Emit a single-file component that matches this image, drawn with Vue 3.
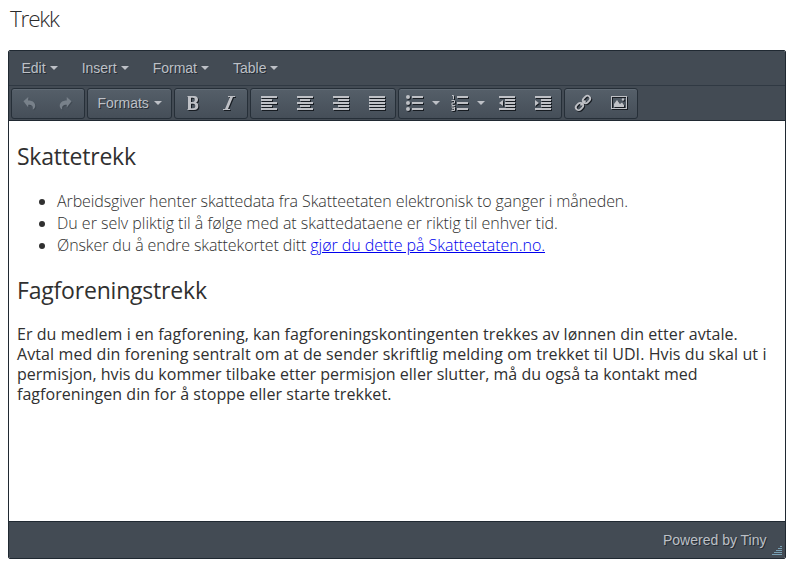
<script setup>
const menus = ['Edit', 'Insert', 'Format', 'Table']
const aligns = [
  { name: 'left', rows: [[0, 16], [0, 11], [0, 16], [0, 11], [0, 16]] },
  { name: 'center', rows: [[0, 16], [3, 10], [0, 16], [3, 10], [0, 16]] },
  { name: 'right', rows: [[0, 16], [5, 11], [0, 16], [5, 11], [0, 16]] },
  { name: 'justify', rows: [[0, 16], [0, 16], [0, 16], [0, 16], [0, 16]] }
]
</script>

<template>
  <main class="page">
    <h1 class="title">Trekk</h1>
    <section class="editor">
      <nav class="menubar">
        <button v-for="menu in menus" :key="menu" class="menu">
          <span>{{ menu }}</span><i class="caret"></i>
        </button>
      </nav>
      <div class="toolbar">
        <div class="group history">
          <button class="tool dim" aria-label="Undo">
            <svg width="16" height="16" viewBox="0 0 16 16"><path d="M6 1v4c5 0 8 2.500 8 6 0 2-1 3.500-3 4.500 1-3.500-.5-5.500-5-5.500v3L.5 6z" /></svg>
          </button>
          <button class="tool dim redo" aria-label="Redo">
            <svg width="16" height="16" viewBox="0 0 16 16"><path d="M10 1v4c-5 0-8 2.500-8 6 0 2 1 3.500 3 4.500-1-3.500.5-5.500 5-5.500v3L15.500 6z" /></svg>
          </button>
        </div>
        <div class="group formats">
          <button class="menu"><span>Formats</span><i class="caret"></i></button>
        </div>
        <div class="group styles">
          <button class="tool" aria-label="Bold">
            <svg width="16" height="16" viewBox="0 0 16 16"><path fill-rule="evenodd" d="M2.500 1H9c2.700 0 4 1.500 4 3.500 0 1.500-.7 2.500-2 3 1.700.5 2.300 1.700 2.300 3.500 0 2.500-1.500 4-4.300 4H2.500v-1H3V2h-.5zM6 2.700V7h1.800c1.500 0 2-1 2-2.200s-.5-2.100-2-2.100zM6 8.700v4.600h2c1.700 0 2.300-1 2.300-2.300S9.700 8.700 8 8.700z" /></svg>
          </button>
          <button class="tool" aria-label="Italic">
            <svg width="16" height="16" viewBox="0 0 16 16"><path d="M7 1h7v1h-2L7 14h2v1H2v-1h2L9 2H7z" /></svg>
          </button>
        </div>
        <div class="group">
          <button v-for="align in aligns" :key="align.name" class="tool" :aria-label="align.name">
            <svg width="16" height="16" viewBox="0 0 16 16"><rect v-for="(row, i) in align.rows" :key="i" :x="row[0]" :y="1 + i * 3" :width="row[1]" height="2" /></svg>
          </button>
        </div>
        <div class="group lists">
          <button class="tool split" aria-label="Bullet list">
            <svg width="17" height="16" viewBox="0 0 17 16"><circle cx="2" cy="2" r="2" /><circle cx="2" cy="8" r="2" /><circle cx="2" cy="14" r="2" /><path d="M6 1h11v2H6zM6 7h11v2H6zM6 13h11v2H6z" /></svg>
            <i class="caret"></i>
          </button>
          <button class="tool split" aria-label="Numbered list">
            <svg width="17" height="16" viewBox="0 0 17 16"><path d="M6 1h11v2H6zM6 7h11v2H6zM6 13h11v2H6z" /><path class="thin" d="M1 .5h1.500V4M.5 5.500h3v2.500h-2.500v2.500h3M.5 12h3v3.500h-3M1 13.700h2.500" /></svg>
            <i class="caret"></i>
          </button>
          <button class="tool" aria-label="Outdent">
            <svg width="16" height="16" viewBox="0 0 16 16"><path d="M0 1h16v2H0zM6 4h10v2H6zM6 7h10v2H6zM6 10h10v2H6zM0 13h16v2H0zM4 5v6L0 8z" /></svg>
          </button>
          <button class="tool" aria-label="Indent">
            <svg width="16" height="16" viewBox="0 0 16 16"><path d="M0 1h16v2H0zM6 4h10v2H6zM6 7h10v2H6zM6 10h10v2H6zM0 13h16v2H0zM0 5v6L4 8z" /></svg>
          </button>
        </div>
        <div class="group media">
          <button class="tool" aria-label="Link">
            <svg width="16" height="16" viewBox="0 0 16 16"><g class="link" transform="rotate(-45 8 8)"><rect x="-1" y="5.200" width="8" height="5.600" rx="2.800" /><rect x="9" y="5.200" width="8" height="5.600" rx="2.800" /><path d="M4.500 8h7" /></g></svg>
          </button>
          <button class="tool" aria-label="Image">
            <svg width="16" height="16" viewBox="0 0 16 16"><path fill-rule="evenodd" d="M0 1h16v13H0zM1 2v11h14V2z" /><path d="M3 12V9l3-4 3 4 2-1.500 2 2.500v2z" /><circle cx="12" cy="4.500" r="1.200" /></svg>
          </button>
        </div>
      </div>
      <article class="content">
        <h2 class="h-one">Skattetrekk</h2>
        <ul>
          <li class="li-one">Arbeidsgiver henter skattedata fra Skatteetaten elektronisk to ganger i måneden.</li>
          <li class="li-two">Du er selv pliktig til å følge med at skattedataene er riktig til enhver tid.</li>
          <li class="li-three">Ønsker du å endre skattekortet ditt <a>gjør du dette på Skatteetaten.no.</a></li>
        </ul>
        <h2 class="h-two">Fagforeningstrekk</h2>
        <p>
          <span class="p-one">Er du medlem i en fagforening, kan fagforeningskontingenten trekkes av lønnen din etter avtale.</span><br>
          <span class="p-two">Avtal med din forening sentralt om at de sender skriftlig melding om trekket til UDI. Hvis du skal ut i</span><br>
          <span class="p-three">permisjon, hvis du kommer tilbake etter permisjon eller slutter, må du også ta kontakt med</span><br>
          <span class="p-four">fagforeningen din for å stoppe eller starte trekket.</span>
        </p>
      </article>
      <footer class="statusbar">
        <span>Powered by Tiny</span>
        <svg class="grip" width="10" height="10" viewBox="0 0 10 10"><path d="M8 .5h2M6 2.500h4M4 4.500h6M2 6.500h8M0 8.500h10" /></svg>
      </footer>
    </section>
  </main>
</template>

<style>
body { background: #fff; }
</style>

<style scoped>
* { box-sizing: border-box; }
.page { width: 793px; height: 572px; padding: 0 7px 0 8px; overflow: hidden; font-family: "Open Sans", "Noto Sans", sans-serif; color: #2b2b2b; }
.title { margin: 0; height: 50px; padding: 0 0 0 2px; font-size: 22.5px; line-height: 37px; font-weight: 300; letter-spacing: -1.2px; }
.editor { height: 509px; border: 1px solid #202932; border-radius: 2px; background: #fff; display: flex; flex-direction: column; overflow: hidden; }
button { font: inherit; color: inherit; border: 0; background: none; padding: 0; margin: 0; text-shadow: inherit; }
.menubar, .toolbar, .statusbar { background: #434b54; color: #bdc0c6; font-family: "Liberation Sans", Arial, sans-serif; font-size: 14px; text-shadow: 1px 1px #252c34; flex: none; }
.menubar { height: 34px; display: flex; padding: 0 0 0 12.5px; gap: 24px; }
.menu { display: flex; align-items: center; gap: 4px; height: 34px; white-space: nowrap; }
.caret { width: 0; height: 0; border: 4px solid transparent; border-top-color: #bdc0c6; border-bottom: 0; }
.toolbar { height: 36px; border-top: 1px solid #303943; border-bottom: 1px solid #202932; padding: 2px; display: flex; gap: 2px; }
.group { height: 31px; flex: none; border: 1px solid #262f38; border-radius: 3px; display: flex; align-items: center; background: linear-gradient(#555f69, #454e58); box-shadow: inset 0 1px #606a74; }
.group .menu { height: 28px; margin-bottom: 1px; padding-left: 9.5px; gap: 5px; }
.history, .styles, .media { width: 74px; }
.formats { width: 85px; }
.tool { width: 36px; height: 28px; margin-bottom: 1px; display: flex; align-items: center; justify-content: center; }
.tool svg { fill: #bfc1c6; filter: drop-shadow(1px 1px 0 #171c22); overflow: visible; }
.dim svg { width: 14px; height: 14px; fill: #78818a; filter: drop-shadow(1px 1px 0 #414a53); }
.redo { padding-right: 2px; }
.split { width: 45px; gap: 9px; justify-content: flex-start; padding-left: 7px; }
.tool .thin { fill: none; stroke: #bfc1c6; stroke-width: 1; }
.link { fill: none; stroke: #bfc1c6; stroke-width: 1.8; }
.content { flex: 1; min-height: 0; padding: 18px 8px 0; font-size: 16px; color: #303030; white-space: nowrap; }
h2 { margin: 0; font-size: 23px; line-height: 34px; font-weight: 400; }
.h-one { letter-spacing: -0.25px; }
.h-two { letter-spacing: -0.2px; }
ul { margin: 17px 0 17px; padding: 0 0 0 40px; }
li { line-height: 22px; font-weight: 300; }
.li-one { letter-spacing: -0.09px; }
.li-two { letter-spacing: -0.015px; }
.li-three { letter-spacing: -0.1px; }
.li-three a { letter-spacing: -0.04px; }
a { color: #0000ee; text-decoration: underline; }
p { margin: 17px 0 0; line-height: 20px; }
.p-one { letter-spacing: 0.06px; }
.p-two { letter-spacing: 0.095px; }
.p-three { letter-spacing: 0.02px; }
.p-four { letter-spacing: 0.04px; }
.statusbar { height: 37px; border-top: 1px solid #202932; display: flex; align-items: center; justify-content: flex-end; padding: 0 18.5px 0 0; position: relative; }
.grip { position: absolute; right: 3px; bottom: 2px; stroke: #78a0b4; }
</style>
